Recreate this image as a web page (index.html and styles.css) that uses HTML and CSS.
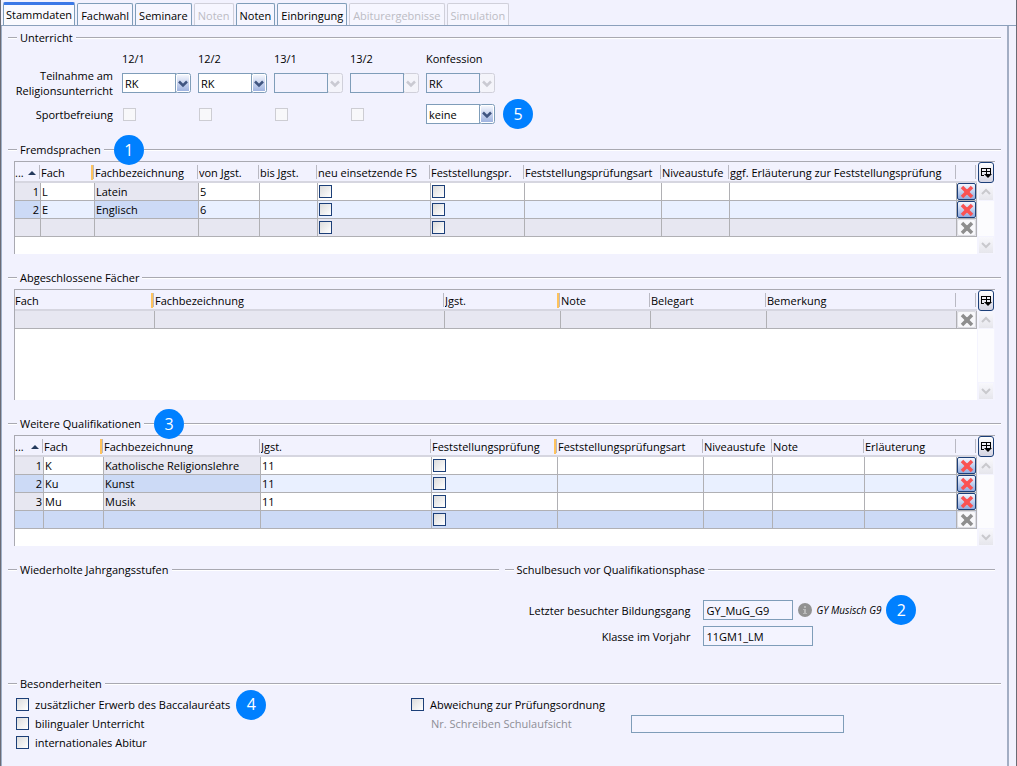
FILE: index.html
```html
<!DOCTYPE html>
<html lang="de">
<head>
  <meta charset="UTF-8">
  <meta name="viewport" content="width=device-width, initial-scale=1.0">
  <title>Stammdaten</title>
  <link rel="stylesheet" href="styles.css">
</head>
<body>
  <!-- shared icons -->
  <svg class="sprite" aria-hidden="true">
    <symbol id="icon-x" viewBox="0 0 16 14">
      <path d="M3 2l10 10M13 2L3 12" fill="none" stroke="currentColor" stroke-width="3.500"/>
      <path d="M5 7l3-3 3 3-3 3z" fill="currentColor"/>
    </symbol>
    <symbol id="icon-columns" viewBox="0 0 12 12">
      <g fill="#000" shape-rendering="crispEdges">
        <path d="M1 1h10v1H1zM1 4h10v1H1zM1 1h1v8H1zM6 1h1v6H6zM10 1h1v6h-1zM1 8h3v1H1z"/>
      </g>
      <path d="M4 7h8l-4 4z" fill="#000"/>
    </symbol>
    <symbol id="icon-up" viewBox="0 0 12 12">
      <path d="M2 8l4-4 4 4" fill="none" stroke="#c9c9cd" stroke-width="2"/>
    </symbol>
    <symbol id="icon-down" viewBox="0 0 12 12">
      <path d="M2 4l4 4 4-4" fill="none" stroke="#c9c9cd" stroke-width="2"/>
    </symbol>
  </svg>

  <div class="window">
    <nav class="tabs">
      <button class="tab active">Stammdaten</button>
      <button class="tab">Fachwahl</button>
      <button class="tab">Seminare</button>
      <button class="tab" disabled>Noten</button>
      <button class="tab">Noten</button>
      <button class="tab">Einbringung</button>
      <button class="tab" disabled>Abiturergebnisse</button>
      <button class="tab" disabled>Simulation</button>
    </nav>

    <main class="panel">
      <section>
        <h2 class="title"><span>Unterricht</span></h2>
        <div class="lessons">
          <span></span>
          <span>12/1</span>
          <span>12/2</span>
          <span>13/1</span>
          <span>13/2</span>
          <span>Konfession</span>

          <span class="label">Teilnahme am Religionsunterricht</span>
          <select class="combo" aria-label="Religion 12/1"><option>RK</option></select>
          <select class="combo" aria-label="Religion 12/2"><option>RK</option></select>
          <select class="combo" aria-label="Religion 13/1" disabled><option></option></select>
          <select class="combo" aria-label="Religion 13/2" disabled><option></option></select>
          <select class="combo" aria-label="Konfession" disabled><option>RK</option></select>

          <span class="label">Sportbefreiung</span>
          <input type="checkbox" aria-label="Sportbefreiung 12/1" disabled>
          <input type="checkbox" aria-label="Sportbefreiung 12/2" disabled>
          <input type="checkbox" aria-label="Sportbefreiung 13/1" disabled>
          <input type="checkbox" aria-label="Sportbefreiung 13/2" disabled>
          <div class="with-badge">
            <select class="combo" aria-label="Sportbefreiung"><option>keine</option></select>
            <span class="badge">5</span>
          </div>
        </div>
      </section>

      <section class="languages">
        <h2 class="title"><span>Fremdsprachen</span><i class="dash"></i><b class="badge">1</b></h2>
        <div class="pane">
          <div class="grid">
            <table class="t-languages">
              <colgroup><col><col><col><col><col><col><col><col><col><col><col></colgroup>
              <thead>
                <tr>
                  <th class="sorted">...</th><th class="key">Fach</th><th>Fachbezeichnung</th><th>von Jgst.</th><th>bis Jgst.</th>
                  <th>neu einsetzende FS</th><th>Feststellungspr.</th><th>Feststellungsprüfungsart</th>
                  <th>Niveaustufe</th><th>ggf. Erläuterung zur Feststellungsprüfung</th><th></th>
                </tr>
              </thead>
              <tbody>
                <tr>
                  <td class="num">1</td><td>L</td><td class="fixed">Latein</td><td>5</td><td></td>
                  <td><input type="checkbox" aria-label="neu einsetzend"></td>
                  <td><input type="checkbox" aria-label="Feststellungsprüfung"></td>
                  <td></td><td></td><td></td>
                  <td><button class="del" aria-label="Löschen"><svg><use href="#icon-x"/></svg></button></td>
                </tr>
                <tr class="even">
                  <td class="num">2</td><td>E</td><td class="fixed">Englisch</td><td>6</td><td></td>
                  <td><input type="checkbox" aria-label="neu einsetzend"></td>
                  <td><input type="checkbox" aria-label="Feststellungsprüfung"></td>
                  <td></td><td></td><td></td>
                  <td><button class="del" aria-label="Löschen"><svg><use href="#icon-x"/></svg></button></td>
                </tr>
                <tr class="blank">
                  <td></td><td></td><td></td><td></td><td></td>
                  <td><input type="checkbox" aria-label="neu einsetzend"></td>
                  <td><input type="checkbox" aria-label="Feststellungsprüfung"></td>
                  <td></td><td></td><td></td>
                  <td><button class="del" aria-label="Löschen" disabled><svg><use href="#icon-x"/></svg></button></td>
                </tr>
              </tbody>
            </table>
          </div>
          <div class="rail">
            <button class="columns" aria-label="Spalten"><svg><use href="#icon-columns"/></svg></button>
            <button class="scroll" aria-label="Nach oben" disabled><svg><use href="#icon-up"/></svg></button>
            <div class="track"></div>
            <button class="scroll" aria-label="Nach unten" disabled><svg><use href="#icon-down"/></svg></button>
          </div>
        </div>
      </section>

      <section class="block">
        <h2 class="title"><span>Abgeschlossene Fächer</span></h2>
        <div class="pane tall">
          <div class="grid">
            <table class="t-subjects">
              <colgroup><col><col><col><col><col><col><col></colgroup>
              <thead>
                <tr>
                  <th class="key">Fach</th><th>Fachbezeichnung</th><th class="key">Jgst.</th><th>Note</th>
                  <th>Belegart</th><th>Bemerkung</th><th></th>
                </tr>
              </thead>
              <tbody>
                <tr class="blank">
                  <td></td><td></td><td></td><td></td><td></td><td></td>
                  <td><button class="del" aria-label="Löschen" disabled><svg><use href="#icon-x"/></svg></button></td>
                </tr>
              </tbody>
            </table>
          </div>
          <div class="rail">
            <button class="columns" aria-label="Spalten"><svg><use href="#icon-columns"/></svg></button>
            <button class="scroll" aria-label="Nach oben" disabled><svg><use href="#icon-up"/></svg></button>
            <div class="track"></div>
            <button class="scroll" aria-label="Nach unten" disabled><svg><use href="#icon-down"/></svg></button>
          </div>
        </div>
      </section>

      <section class="block">
        <h2 class="title"><span>Weitere Qualifikationen</span><i class="dash"></i><b class="badge">3</b></h2>
        <div class="pane tall">
          <div class="grid">
            <table class="t-quali">
              <colgroup><col><col><col><col><col><col><col><col><col><col></colgroup>
              <thead>
                <tr>
                  <th class="sorted">...</th><th class="key">Fach</th><th>Fachbezeichnung</th><th>Jgst.</th>
                  <th class="key">Feststellungsprüfung</th><th>Feststellungsprüfungsart</th><th>Niveaustufe</th>
                  <th>Note</th><th>Erläuterung</th><th></th>
                </tr>
              </thead>
              <tbody>
                <tr>
                  <td class="num">1</td><td>K</td><td class="fixed">Katholische Religionslehre</td><td>11</td>
                  <td><input type="checkbox" aria-label="Feststellungsprüfung"></td>
                  <td></td><td></td><td></td><td></td>
                  <td><button class="del" aria-label="Löschen"><svg><use href="#icon-x"/></svg></button></td>
                </tr>
                <tr class="even">
                  <td class="num">2</td><td>Ku</td><td class="fixed">Kunst</td><td>11</td>
                  <td><input type="checkbox" aria-label="Feststellungsprüfung"></td>
                  <td></td><td></td><td></td><td></td>
                  <td><button class="del" aria-label="Löschen"><svg><use href="#icon-x"/></svg></button></td>
                </tr>
                <tr>
                  <td class="num">3</td><td>Mu</td><td class="fixed">Musik</td><td>11</td>
                  <td><input type="checkbox" aria-label="Feststellungsprüfung"></td>
                  <td></td><td></td><td></td><td></td>
                  <td><button class="del" aria-label="Löschen"><svg><use href="#icon-x"/></svg></button></td>
                </tr>
                <tr class="blank even">
                  <td></td><td></td><td></td><td></td>
                  <td><input type="checkbox" aria-label="Feststellungsprüfung"></td>
                  <td></td><td></td><td></td><td></td>
                  <td><button class="del" aria-label="Löschen" disabled><svg><use href="#icon-x"/></svg></button></td>
                </tr>
              </tbody>
            </table>
          </div>
          <div class="rail">
            <button class="columns" aria-label="Spalten"><svg><use href="#icon-columns"/></svg></button>
            <button class="scroll" aria-label="Nach oben" disabled><svg><use href="#icon-up"/></svg></button>
            <div class="track"></div>
            <button class="scroll" aria-label="Nach unten" disabled><svg><use href="#icon-down"/></svg></button>
          </div>
        </div>
      </section>

      <div class="halves block">
        <section>
          <h2 class="title"><span>Wiederholte Jahrgangsstufen</span></h2>
        </section>
        <section>
          <h2 class="title"><span>Schulbesuch vor Qualifikationsphase</span></h2>
          <div class="school">
            <label for="bildungsgang">Letzter besuchter Bildungsgang</label>
            <div class="with-badge">
              <input class="text program" id="bildungsgang" type="text" value="GY_MuG_G9" readonly>
              <svg class="info" viewBox="0 0 14 14">
                <circle cx="7" cy="7" r="7" fill="#929292"/>
                <path d="M6 3h2v2H6zM5 6h3v4h1v1H5v-1h1V7H5z" fill="#b9b9b9"/>
              </svg>
              <em>GY Musisch G9</em>
              <span class="badge">2</span>
            </div>
            <label for="klasse">Klasse im Vorjahr</label>
            <input class="text class-name" id="klasse" type="text" value="11GM1_LM" readonly>
          </div>
        </section>
      </div>

      <section class="special">
        <h2 class="title"><span>Besonderheiten</span></h2>
        <div class="special-cols">
          <div>
            <div class="check-row">
              <label class="check"><input type="checkbox">zusätzlicher Erwerb des Baccalauréats</label>
              <span class="badge">4</span>
            </div>
            <div class="check-row"><label class="check"><input type="checkbox">bilingualer Unterricht</label></div>
            <div class="check-row"><label class="check"><input type="checkbox">internationales Abitur</label></div>
          </div>
          <div>
            <div class="check-row"><label class="check"><input type="checkbox">Abweichung zur Prüfungsordnung</label></div>
            <div class="check-row letter">
              <label for="schreiben">Nr. Schreiben Schulaufsicht</label>
              <input class="text" id="schreiben" type="text" readonly>
            </div>
          </div>
        </div>
      </section>
    </main>
  </div>
</body>
</html>
```

FILE: styles.css
```css
*, *::before, *::after {
  box-sizing: border-box;
}
body {
  margin: 0;
  background: #f2f2fe;
  color: #000;
  font-family: "Open Sans", "Noto Sans", sans-serif;
  font-size: 11px;
  line-height: 15px;
}
button, input, select {
  font: inherit;
  color: inherit;
  margin: 0;
  padding: 0;
}
.sprite {
  display: none;
}
.window {
  min-height: 100vh;
  display: flex;
  flex-direction: column;
  border-left: 1px solid #6b6b75;
  border-right: 1px solid #6b6b75;
}

/* tabs */
.tabs {
  display: flex;
  align-items: flex-end;
  gap: 2px;
  height: 26px;
  padding-left: 2px;
  border-bottom: 1px solid #8ba0bc;
}
.tab {
  height: 22px;
  padding: 2px 3px 0;
  background: #f6f6ff;
  border: 1px solid #7f9db9;
  border-bottom: none;
  border-radius: 2px 2px 0 0;
}
.tab.active {
  height: 23px;
  padding: 0 2px 2px;
  border-top: 3px solid #3b78e7;
  background: #fafaff;
}
.tab:disabled {
  color: #bcbcc4;
  border-color: #d0d0da;
}

.panel {
  flex: 1;
  margin-right: 7px;
  padding: 4px 6px 14px;
  border-left: 1px solid #9fb0c8;
  border-right: 2px solid #a3aec4;
}

/* group titles */
.title {
  display: flex;
  align-items: center;
  height: 16px;
  margin: 0;
  font-size: 11px;
  font-weight: 400;
}
.title::before,
.title::after,
.dash {
  content: "";
  height: 2px;
  background: #a9a9b1;
  border-bottom: 1px solid #fff;
}
.title::before {
  width: 9px;
}
.title::after {
  flex: 1;
}
.title span {
  padding: 0 3px 2px;
}
.dash {
  width: 10px;
}
.badge {
  flex: none;
  display: flex;
  align-items: center;
  justify-content: center;
  width: 30px;
  height: 30px;
  margin: -8px 0;
  border-radius: 50%;
  background: #0080ff;
  color: #fff;
  font-size: 16px;
  font-weight: 400;
  position: relative;
  z-index: 1;
}

/* Unterricht */
.lessons {
  display: grid;
  grid-template-columns: 105px repeat(5, 67px);
  grid-template-rows: 24px 26px 36px;
  column-gap: 9px;
  align-items: center;
}
.label {
  text-align: right;
}
.with-badge {
  display: flex;
  align-items: center;
  gap: 7px;
}
.combo {
  appearance: none;
  flex: none;
  width: 70px;
  height: 20px;
  padding: 0 18px 0 3px;
  border: none;
  border-radius: 0;
  background: url("data:image/svg+xml,%3Csvg xmlns='http://www.w3.org/2000/svg' width='70' height='20'%3E%3Cdefs%3E%3ClinearGradient id='g' x2='0' y2='1'%3E%3Cstop stop-color='%23f4f6fd'/%3E%3Cstop offset='1' stop-color='%239fb3e0'/%3E%3C/linearGradient%3E%3C/defs%3E%3Crect x='.5' y='.5' width='53' height='19' fill='%23fff' stroke='%237f9db9'/%3E%3Crect x='53.500' y='.5' width='15' height='19' rx='2' fill='%23fff' stroke='%237f9db9'/%3E%3Crect x='55' y='2' width='12' height='16' fill='url(%23g)'/%3E%3Cpath d='M57 8.500l4 4 4-4' fill='none' stroke='%23405580' stroke-width='2.500'/%3E%3C/svg%3E") no-repeat;
}
.combo:disabled {
  color: #000;
  opacity: 1;
  background-image: url("data:image/svg+xml,%3Csvg xmlns='http://www.w3.org/2000/svg' width='70' height='20'%3E%3Crect x='53.500' y='.5' width='15' height='19' rx='2' fill='%23f4f4fa' stroke='%23d0d0da'/%3E%3Crect x='.5' y='.5' width='53' height='19' fill='%23f2f2fe' stroke='%237f9db9'/%3E%3Cpath d='M57 8.500l4 4 4-4' fill='none' stroke='%23cacad2' stroke-width='2.500'/%3E%3C/svg%3E");
}
input[type="checkbox"] {
  appearance: none;
  display: block;
  flex: none;
  width: 13px;
  height: 13px;
  border: 1px solid #1c3f78;
  background: linear-gradient(135deg, #dcdcdc, #fff);
}
input[type="checkbox"]:disabled {
  border-color: #cdcdd3;
  background: #f8f8fa;
}
.lessons input {
  margin-left: 1px;
}

/* tables */
.languages {
  margin-top: 10px;
}
.block {
  margin-top: 16px;
}
.pane {
  display: flex;
  min-height: 93px;
  margin: 3px 6px 0;
  border-top: 1px solid #a9a9b1;
  border-left: 1px solid #a9a9b1;
  background: #fff;
}
.pane.tall {
  min-height: 111px;
}
.grid {
  flex: 1;
  min-width: 0;
}
table {
  width: 100%;
  table-layout: fixed;
  border-spacing: 0;
}
th {
  height: 21px;
  padding: 2px 0 0;
  overflow: hidden;
  border-bottom: 2px solid #d6d6e0;
  background: linear-gradient(#b9b9c3, #b9b9c3) right 1px top 3px / 1px 14px no-repeat #f2f2fe;
  font-weight: 400;
  text-align: left;
  white-space: nowrap;
}
th.key {
  background:
    linear-gradient(#b9b9c3, #b9b9c3) right 1px top 3px / 1px 14px no-repeat,
    linear-gradient(#ffc35c, #ffc35c) right 2px top 3px / 2px 15px no-repeat #f2f2fe;
}
.sorted::after {
  content: "";
  display: inline-block;
  margin-left: 4px;
  border: 4px solid transparent;
  border-top: none;
  border-bottom: 4px solid #243a5c;
  vertical-align: 2px;
}
.t-quali .sorted::after {
  margin-left: 7px;
}
td {
  height: 18px;
  padding: 0 1px;
  border-right: 1px solid #b0b0b4;
  border-bottom: 1px solid #b0b0b4;
  white-space: nowrap;
}
.num {
  text-align: right;
}
.num, .fixed, .blank td {
  background: #e7e7f1;
}
.even td {
  background: #e9f0ff;
}
.even .num, .even .fixed, .blank.even td {
  background: #ccdaf6;
}
td:last-child {
  padding: 0;
}
.t-languages col:nth-child(1) { width: 26px; }
.t-languages col:nth-child(2) { width: 54px; }
.t-languages col:nth-child(3) { width: 104px; }
.t-languages col:nth-child(4) { width: 61px; }
.t-languages col:nth-child(5) { width: 58px; }
.t-languages col:nth-child(6) { width: 113px; }
.t-languages col:nth-child(7) { width: 94px; }
.t-languages col:nth-child(8) { width: 137px; }
.t-languages col:nth-child(9) { width: 68px; }
.t-subjects col:nth-child(1) { width: 140px; }
.t-subjects col:nth-child(2) { width: 290px; }
.t-subjects col:nth-child(3) { width: 116px; }
.t-subjects col:nth-child(4) { width: 90px; }
.t-subjects col:nth-child(5) { width: 116px; }
.t-quali col:nth-child(1) { width: 29px; }
.t-quali col:nth-child(2) { width: 60px; }
.t-quali col:nth-child(3) { width: 157px; }
.t-quali col:nth-child(4) { width: 171px; }
.t-quali col:nth-child(5) { width: 126px; }
.t-quali col:nth-child(6) { width: 146px; }
.t-quali col:nth-child(7) { width: 69px; }
.t-quali col:nth-child(8) { width: 92px; }
table col:last-child { width: 20px; }

.del {
  display: flex;
  align-items: center;
  justify-content: center;
  width: 19px;
  height: 17px;
  border: 1px solid #1c3f78;
  border-radius: 2px;
  background: linear-gradient(#f4f7ff, #8fabdf);
  color: #fa5252;
}
.del:disabled {
  border-color: #dcdce2;
  background: #f8f8fb;
  color: #8e8e8e;
}
.del svg {
  flex: none;
  width: 16px;
  height: 14px;
}

.rail {
  display: flex;
  flex-direction: column;
  width: 18px;
  padding: 0 1px;
  background: #f4f4fe;
}
.columns {
  display: flex;
  align-items: center;
  justify-content: center;
  height: 21px;
  border: 1px solid #1c3f78;
  border-radius: 3px;
  background: linear-gradient(#fff, #d4d4e2);
}
.columns svg, .scroll svg {
  flex: none;
  width: 12px;
  height: 12px;
}
.scroll {
  display: flex;
  align-items: center;
  justify-content: center;
  height: 16px;
  margin: 1px 1px;
  border: none;
  background: linear-gradient(#f8f8fc, #e6e6ec);
}
.track {
  flex: 1;
  background: #fcfcfe;
}

/* lower part */
.halves {
  display: grid;
  grid-template-columns: 1fr 1fr;
  gap: 6px;
  padding-right: 6px;
}
.school {
  display: grid;
  grid-template-columns: 186px 1fr;
  gap: 6px 12px;
  align-items: center;
  padding-top: 22px;
}
.school label {
  text-align: right;
}
.school .with-badge {
  gap: 5px;
}
.school em {
  font-size: 10px;
}
.text {
  height: 20px;
  padding: 0 3px;
  border: 1px solid #7f9db9;
  background: #f4f4ff;
  outline: none;
}
.program {
  width: 90px;
}
.class-name {
  width: 110px;
}
.info {
  width: 14px;
  height: 14px;
}
.special {
  margin-top: 30px;
}
.special-cols {
  display: grid;
  grid-template-columns: 395px 1fr;
  padding: 3px 8px 0;
}
.check-row {
  display: flex;
  align-items: center;
  gap: 6px;
  height: 19px;
}
.check {
  display: flex;
  align-items: center;
  gap: 6px;
}
.letter {
  color: #8e8e96;
  padding-left: 20px;
}
.letter label {
  width: 194px;
}
.letter .text {
  width: 213px;
  height: 18px;
}
```
